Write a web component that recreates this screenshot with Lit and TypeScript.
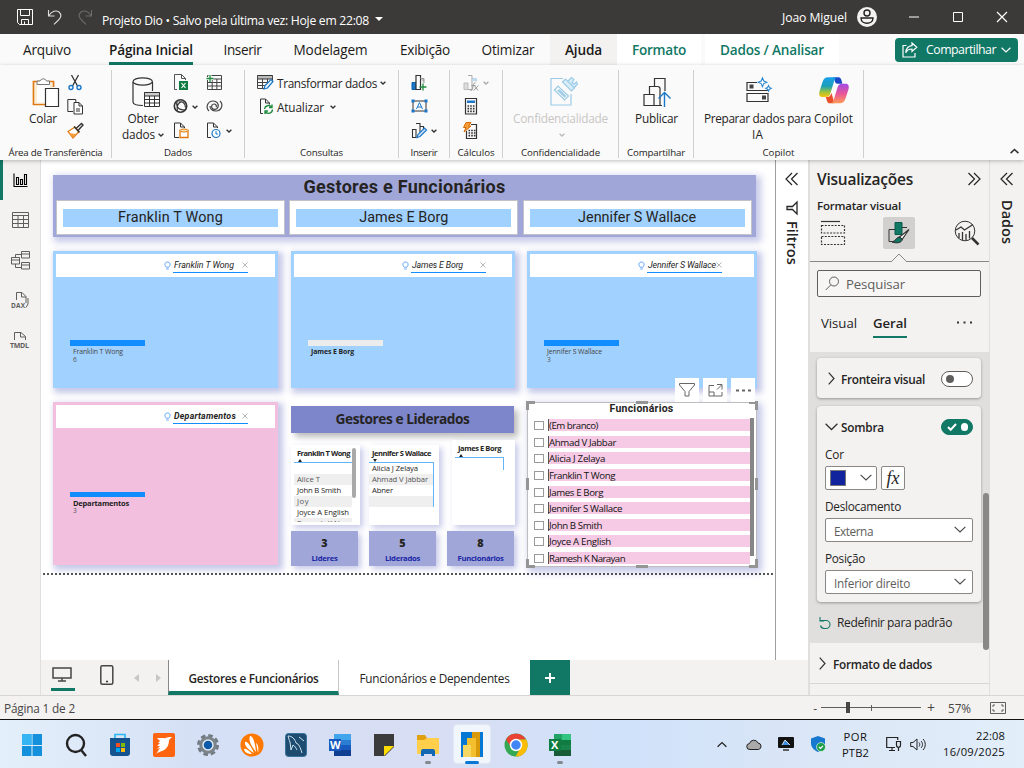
import { LitElement, html, css, svg, nothing } from "lit";
import { customElement, property } from "lit/decorators.js";
import { classMap } from "lit/directives/class-map.js";

/** A run of text whose tracking is adjusted so that it fills a given width. */
@customElement("fit-text")
class FitText extends LitElement {
  @property({ type: Number }) w = 0;
  @property() text = "";
  static styles = css`
    :host { display: inline-block; white-space: pre; flex: none; text-align: left; }
  `;
  render() {
    return html`<span>${this.text}</span>`;
  }
  updated() {
    const s = this.renderRoot.querySelector("span") as HTMLElement;
    s.style.letterSpacing = "0px";
    const natural = s.getBoundingClientRect().width;
    s.style.letterSpacing = `${(this.w - natural) / Math.max(1, this.text.length)}px`;
    this.style.width = `${this.w}px`;
  }
}

const t = (w: number, text: string, cls = "") =>
  html`<fit-text class=${cls} .w=${w} .text=${text}></fit-text>`;

const ic = (w: number, h: number, body: unknown, cls = "") =>
  html`<svg class="ic ${cls}" width=${w} height=${h} viewBox="0 0 ${w} ${h}" fill="none" stroke="#333" stroke-width="1">${body}</svg>`;

const chev = (w = 6, c = "#333", sw = 1.4) =>
  html`<svg class="ic" width=${w} height=${w / 2 + 1.5} viewBox="0 0 ${w} ${w / 2 + 1.5}" fill="none" stroke=${c} stroke-width=${sw}><path d="M.6 .8L${w / 2} ${w / 2}L${w - 0.6} .8" /></svg>`;

const dbl = (right = false) =>
  ic(14, 14, right
    ? svg`<path d="M1.500 1L7.500 7L1.500 13M7 1L13 7L7 13" stroke="#252423" stroke-width="1.200"/>`
    : svg`<path d="M12.500 1L6.500 7L12.500 13M7 1L1 7L7 13" stroke="#252423" stroke-width="1.200"/>`);

const grid = (x: number, y: number, s: number, c = "#333") =>
  svg`<path d="M${x} ${y}h${s}v${s}h-${s}zM${x} ${y + s / 4}h${s}M${x} ${y + s / 2}h${s}M${x} ${y + (s * 3) / 4}h${s}M${x + s / 3} ${y + s / 4}v${s * 0.75}M${x + (s * 2) / 3} ${y + s / 4}v${s * 0.75}" stroke=${c}/>`;

const I = {
  save: ic(16, 16, svg`<path d="M.5 .5h15v15H2.500l-2-2zM3.500 .5v6h9v-6M4.500 15.500v-5h7v5M7.500 15v-2.500" stroke="#fff"/>`),
  undo: ic(16, 16, svg`<path d="M1.500 1v6h6M1.500 7C5 2 9 .8 12 3c3 2.500 2 6-.5 8L7 15.300" stroke="#dddcdb" stroke-width="1.100"/>`),
  redo: ic(16, 16, svg`<path d="M14.500 1v6h-6M14.500 7C11 2 7 .8 4 3c-3 2.500-2 6 .5 8L9 15.300" stroke="#6d6b69" stroke-width="1.100"/>`),
  paste: ic(28, 31, svg`<path d="M8 4.500H1.500v23H13M16 4.500h5.500V10" stroke="#e07a10" stroke-width="1.700"/><path d="M3 6h17v5h-7v15H3z" fill="#fdeed2" stroke="none"/><path d="M5 5.500h13v8h-5v12H5z" fill="#fdfdfd" stroke="none"/><path d="M5 7.500V4h3a3.500 3.500 0 0 1 6.500 0h3v3.500z" fill="#fff" stroke="#777"/><path d="M13.500 11.500h13v18h-13z" fill="#fff" stroke-width="1.200"/>`),
  cut: ic(16, 17, svg`<path d="M4.500 1l6 11M11.500 1l-6 11" stroke-width="1.300"/><circle cx="4" cy="13.500" r="2" stroke="#1a77c9" stroke-width="1.400"/><circle cx="12" cy="13.500" r="2" stroke="#1a77c9" stroke-width="1.400"/>`),
  copy: ic(17, 17, svg`<path d="M6 13.500H.8V1.500h8V4"/><path d="M7 4.500h5l3.500 3.500v8H7zM12 4.500V8h3.500M9 11h4M9 13h4" fill="#fff"/>`),
  brush: ic(17, 17, svg`<path d="M1 9.500L8 5l4 4.500-6 6.500z" fill="#fff" stroke="#e07a10" stroke-width="1.300"/><path d="M2 11l7 1-3 4z" fill="#f59d3b" stroke="none"/><path d="M7 4.500l5.500 6M9 6.500L14.500 1.500l1.500 1.500-5 5.500" stroke-width="1.400"/>`),
  db: ic(28, 31, svg`<path d="M1 5v20c0 2 4 3.500 10 3.500M20.500 5v9" stroke-width="1.200"/><ellipse cx="10.700" cy="4.500" rx="9.700" ry="3.700" stroke-width="1.200"/><path d="M12.500 15.500h15v14h-15z" fill="#fff"/><path d="M12.500 15.500h15v3.500h-15z" fill="#ccc"/><path d="M12.500 22.500h15M12.500 26h15M17.500 19v11M22.500 19v11"/>`),
  excelFile: ic(16, 17, svg`<path d="M4 15.500H1.500v-15h7l4 4V6M8.500 .5v4h4" stroke="#555"/><rect x="6" y="7" width="9" height="9" fill="#107c41" stroke="none"/><path d="M8.500 9l4 5M12.500 9l-4 5" stroke="#fff" stroke-width="1.200"/>`),
  hub: ic(16, 16, svg`<circle cx="7.500" cy="8" r="6.200" stroke-width="1.600"/><path d="M4 3.500c-1 5 1 8.500 8 8.500M5.500 4c4-1 7 1 7 5.500M4.500 12.500c-1.500-4 .5-8 5-9" stroke-width="1.200"/>`),
  dbFile: ic(16, 17, svg`<path d="M6 15.500H1.500V1h6l4 4v1M7.500 1v4h4"/><path d="M7 8.500v7h8v-7z" fill="#fff" stroke="#e07a10" stroke-width="1.300"/><ellipse cx="11" cy="8.500" rx="4" ry="1.500" fill="#fbe3b0" stroke="#e07a10"/>`),
  newTable: ic(17, 17, svg`${grid(1.5, 1.500, 14, "#444")}<path d="M.5 4.500h7M4 1v7" stroke="#fafafa" stroke-width="3"/><path d="M.5 4.500h7M4 1v7" stroke="#218c41" stroke-width="1.300"/>`),
  spiral: ic(17, 16, svg`<path d="M3 13c-4-4-1-10 4-10 4 0 6 3 5 6s-5 3-6 1 0-4 2-4 3 2 2 3M14 3c4 4 1 10-4 10-4 0-6-2-6-5" stroke="#444" stroke-width="1.200"/>`),
  recent: ic(16, 17, svg`<path d="M5 15.500H1.500V1h6l4 4v1M7.500 1v4h4"/><circle cx="10" cy="11.500" r="4" fill="#fff" stroke="#1a77c9" stroke-width="1.200"/><path d="M10 9v3h2" stroke="#1a77c9"/>`),
  transform: ic(17, 17, svg`<path d="M.5 1.500h15v3.500H.5z" fill="#bbb"/><path d="M.5 1.500v13h8M15.500 2v5M.5 8.500h12M.5 11.500h9M5.500 5v10M10.500 5v5" stroke="#444"/><path d="M7 15l1-3.500L14 5.500l2 2L10.500 14z" fill="#e6f2fb" stroke="#1a77c9" stroke-width="1.200"/>`),
  refresh: ic(15, 17, svg`<path d="M4 15.500H1.500V1h5l4 4v1.500M6.500 1v4h4"/><path d="M5.500 11a4 4 0 0 1 7-2M13.500 11.500a4 4 0 0 1-7 2.500M13 6.500v3h-3M6 16v-3h3" stroke="#218c41" stroke-width="1.400"/>`),
  newVisual: ic(16, 17, svg`<path d="M1 8.500h4v7H1z" fill="#1a77c9" stroke="#0f5ea8"/><path d="M5 1.500h4.500v14H5z" fill="#fff" stroke-width="1.200"/><path d="M9.500 4.500h3.500V9" fill="#bbb" stroke="#999"/><path d="M8.500 13h7M12 9.500v7" stroke="#218c41" stroke-width="1.300"/>`),
  textbox: ic(17, 14, svg`<path d="M2 2h13v10H2z" stroke="#333"/><path d="M5.500 10L8.500 3.500l3 6.500M6.500 8h4" stroke="#1a77c9"/><path d="M.5 .5h3v3h-3zM13.500 .5h3v3h-3zM.5 10.500h3v3h-3zM13.500 10.500h3v3h-3z" fill="#1a77c9" stroke="none"/>`),
  shapes: ic(17, 17, svg`<path d="M1.500 7.500H5v8H1.500zM5 1.500h4v9M9 4.500h3.500v3" stroke-width="1.100"/><path d="M6 15.500l1-3L13.500 6l2 2L9 14.500z" fill="#cfe6f8" stroke="#1a77c9" stroke-width="1.200"/>`),
  quick: ic(17, 17, svg`<path d="M1 9h4v6.500H1z" fill="#ddd" stroke="#bbb"/><path d="M5 1.500h4v14H5M9 4.500h4v3" stroke="#aaa"/><path d="M9.500 4h4v3h-4z" fill="#b9dcf2" stroke="none"/><path d="M7.500 16.500c2 0 2-1 2.500-4s1-4 2.500-3.500M8.500 11.500h4M11.500 11.500l3.500 5M15.500 11.500l-5 5" stroke="#999"/>`),
  calc: ic(14, 17, svg`<path d="M1.500 .5h11v15.500h-11z" stroke-width="1.200"/><path d="M3 2.500h8v2.500H3z" fill="#1a77c9" stroke="none"/><path d="M3.500 8h7M3.500 10.700h7M3.500 13.400h7" stroke-width="1.700" stroke-dasharray="1.600 1.100"/>`),
  calcBolt: ic(16, 17, svg`<path d="M8 2.500h5.500v14h-10V9" stroke-width="1.200"/><path d="M5.500 8.500h7M5.500 11h7M5.500 13.700h7" stroke-width="1.700" stroke-dasharray="1.600 1.100"/><path d="M3 .5h5L5.500 4H8L1 10l2-4.500H.5z" fill="#f59d3b" stroke="#d66a00"/>`),
  sens: ic(28, 31, svg`<g stroke="#9ccbe6" stroke-width="1.200"><path d="M13 1.500H1v26.500h20V17"/><path d="M4.500 13l3.500-4L18.500 19l-4 4zM7.500 13l7 7 1-1-6.500-6.500"/><path d="M12.500 5l3-3 9 9-3 3zM18 4l3.500-3.500 2.500 2-2 3 2 1.500 2.500-2 1 2-3.500 4" fill="#d7edf8"/></g>`),
  publish: ic(28, 31, svg`<path d="M1 17.500h10v11H1zM6.500 17.500v-8h9M11 28.500h8M11.500 9V1.500h10.500V14M15.500 9.500L17 11v17" stroke-width="1.200"/><path d="M21.500 30V16M15.500 21.500l6-6 6 6" stroke="#1a77c9" stroke-width="1.400"/>`),
  prep: ic(26, 26, svg`<path d="M11 5.500H1v8h21v-2M1 16.500h21v8H1z" stroke-width="1.200"/><path d="M3.500 7.500h4v4h-4zM16 18.500h4v4h-4z" fill="#444" stroke="none"/><path d="M16.500 1l1.300 3 3 1.300-3 1.300-1.300 3-1.300-3-3-1.300 3-1.300zM22.500 8.500l.9 1.900 1.900.9-1.900.9-.9 1.900-.9-1.900-1.900-.9 1.900-.9z" fill="#fff" stroke="#2a86cf" stroke-width="1.100"/>`),
  copilot: html`<svg class="ic" width="30" height="27" viewBox="0 0 30 27">
    <defs>
      <linearGradient id="ca" x1="0" y1="0" x2="0" y2="1"><stop offset="0" stop-color="#1ba0ec"/><stop offset=".45" stop-color="#1c9fb8"/><stop offset=".75" stop-color="#9fc43c"/><stop offset="1" stop-color="#fdc20f"/></linearGradient>
      <linearGradient id="cb" x1="0" y1="0" x2="0" y2="1"><stop offset="0" stop-color="#a24ce6"/><stop offset=".5" stop-color="#e8559a"/><stop offset="1" stop-color="#ff9a57"/></linearGradient>
    </defs>
    <path d="M14 .3h5c3 0 3.500 2.500 4.300 6.500h-4.800c-3 0-2-3-4.500-6.500z" fill="#1b48c8"/>
    <path d="M8 20c3 0 3.300-1.500 4.500-4l3 10.300H11c-3.300 0-3-3.500-4.300-6.300z" fill="#e8502b"/>
    <path d="M9 .3h8.500c-1.700 1-2 2.700-2.700 5L11.500 16c-.8 2.600-2 4-4.500 4H3.500C.3 20-.3 17.500.5 14.500L3.500 5C4.500 2 6 .3 9 .3z" fill="url(#ca)"/>
    <path d="M21 26.300h-8.500c1.700-1 2-2.700 2.700-5l3.300-10.700c.8-2.600 2-3.800 4.500-3.800h3.500c3.200 0 3.800 2.500 3 5.500l-3 9.200c-1 3-2.500 4.800-5.500 4.800z" fill="url(#cb)"/></svg>`,
  share: ic(16, 16, svg`<path d="M4.500 3.500H1v11.500h12v-4M10 1l4.800 4.300L10 9.500V7C7 7 5 8 3.800 10.800 4 6.500 6 4 10 3.600z" stroke="#fff" stroke-width="1.200"/>`),
  report: ic(15, 15, svg`<path d="M1 .5v13h13.500M3.500 4.500h2v7h-2zM7.500 6.500h2v5h-2zM11.500 1.500h2v10h-2z" stroke="#000" stroke-width="1.100"/>`),
  tableView: ic(17, 16, svg`<path d="M.5 .5h16v15H.5zM.5 3.500h16M.5 7.500h16M.5 11.500h16M6 3.500v12M11.500 3.500v12" stroke="#605e5c"/>`),
  model: ic(19, 19, svg`<path d="M.5 6.500h8v6.500h-8zM.5 9h8M10.500 .5h8V7h-8zM10.500 3h8M10.500 11.500h8V18h-8zM10.500 14h8M4.500 6V3.500h6M4.500 13v3.500h6" stroke="#605e5c"/>`),
  dax: html`<svg class="ic" width="18" height="18" viewBox="0 0 18 18" fill="none" stroke="#605e5c"><path d="M5.500 9V1.500h5.500l4 4V12M10.500 1.500V6h4.500M17 7v6l-2 3.500"/><text x="0" y="16.500" font-size="6.500" font-weight="700" fill="#605e5c" stroke="none" textLength="14">DAX</text></svg>`,
  tmdl: html`<svg class="ic" width="20" height="18" viewBox="0 0 20 18" fill="none" stroke="#605e5c"><path d="M4.500 9V1.500h6.500l4.500 4V9M10.500 1.500V6h5"/><text x="0" y="17" font-size="7" font-weight="700" fill="#605e5c" stroke="none" textLength="19">TMDL</text></svg>`,
  bulb: ic(7, 9, svg`<path d="M2.200 6.200C.3 4.500.4 1 3.500 1s3.200 3.500 1.300 5.200zM2.300 8h2.400" stroke="#4f9bf5" stroke-width=".9"/>`),
  x: ic(6, 6, svg`<path d="M.5 .5l5 5M5.500 .5l-5 5" stroke="#999" stroke-width=".7"/>`),
  funnelSide: ic(12, 14, svg`<path d="M11 1v12L6.500 8.500H1v-3h5.500z" stroke="#252423" stroke-width="1.300"/>`),
  funnel: ic(16, 16, svg`<path d="M.5 1.500h15v1.500L10 9.500V14H6V9.500L.5 3z" stroke="#666"/>`),
  focus: ic(15, 14, svg`<path d="M6 2.500H1v10.500h13V9M1 9h5v4M9 1.500h5v5M13.500 2L9 6.500" stroke="#666"/>`),
  fields: ic(26, 26, svg`<path d="M1 1.500h19" stroke-width="1.200"/><path d="M1.500 5.500h23v7.500h-23zM1.500 16.500h23v8h-23z" stroke-dasharray="2 1.300" stroke-width="1.200"/>`),
  paint: ic(24, 24, svg`<path d="M8 1.500h7v12H8z" fill="#117865" stroke="#0b5a4c"/><path d="M8 8.500H2v12h3M15 6.500h5" /><path d="M22 8.500L12.500 16l2.500 2.500z" fill="#fff" stroke-width="1.200"/><path d="M12.500 16c-3 0-3.500 4-7.500 5 4 1.500 10 1 10-2.500z" fill="#117865" stroke="#222"/>`),
  analyze: ic(26, 26, svg`<circle cx="11" cy="11" r="9.800"/><path d="M18 18l6.500 6.500" stroke-width="2.500"/><path d="M2 10l5-3 3.500 3L19 4.500M5 18v-5M8.500 20v-8M12 20v-6M15.500 18.500V11" stroke-width="1.300"/>`),
  search: ic(15, 15, svg`<circle cx="9" cy="5.500" r="4.500" stroke="#605e5c"/><path d="M5.700 9L.7 14" stroke="#605e5c"/>`),
  reset: ic(12, 12, svg`<path d="M1 0v4h4M1.500 3.500H7a4 4 0 0 1 0 8H5a4 4 0 0 1-3.500-3" stroke="#117865" stroke-width="1.100"/>`),
};

const gestor = (w: number, name: string, count: string, o: { muted?: boolean; bold?: boolean; pink?: boolean; tw?: number; lw?: number }) => html`
  <div class=${classMap({ card: true, pink: !!o.pink })} style="width:${w}px">
    <div class="strip">
      ${I.bulb}
      <div class="query">${t(o.tw ?? 60, name, "q")}<span class="grow"></span>${I.x}</div>
    </div>
    <div class=${classMap({ bar: true, muted: !!o.muted })}></div>
    <div class=${classMap({ cap: true, strong: !!o.bold })}>${t(o.lw ?? 50, name)}</div>
    <div class="cap num">${count}</div>
  </div>`;

const grp = (w: number, lw: number, label: string, body: unknown) => html`
  <div class="grp" style="width:${w}px"><div class="gbody">${body}</div><div class="glabel">${t(lw, label)}</div></div>`;

const TASKS: [string, unknown, string?][] = [
  ["start", html`<svg width="22" height="24" viewBox="0 0 22 24"><path d="M1 1h9.500v11H1zM11.500 1H21v11h-9.500zM1 13h9.500v10H1zM11.500 13H21v10h-9.500z" fill="#1590dc"/><path d="M1 1h9.500v11H1z" fill="#35b5f3"/></svg>`],
  ["search", html`<svg width="22" height="24" viewBox="0 0 22 24" fill="none" stroke="#222" stroke-width="2.400"><circle cx="10.500" cy="10.500" r="8.500"/><path d="M16.500 17.500L21 23"/></svg>`],
  ["store", html`<svg width="22" height="24" viewBox="0 0 22 24"><path d="M6 6V1.500h10V6" fill="none" stroke="#29b6f0" stroke-width="1.600"/><path d="M1 5h20v15a3 3 0 0 1-3 3H4a3 3 0 0 1-3-3z" fill="#15538f"/><path d="M7 10h4v4H7z" fill="#f25022"/><path d="M12 10h4v4h-4z" fill="#7fba00"/><path d="M7 15h4v4H7z" fill="#00a4ef"/><path d="M12 15h4v4h-4z" fill="#ffb900"/></svg>`],
  ["bird", html`<svg width="22" height="24" viewBox="0 0 22 24"><rect width="22" height="24" rx="2" fill="#ff6410"/><path d="M4 5h8l-1 1c3-2 5-2 8-2l-3 3c0 5-2 9-7 11-2 1-4 1-6 3l4-6-3 1 3-3-3 0 3-3-2 0 2-2z" fill="#fff"/></svg>`],
  ["settings", html`<svg width="22" height="24" viewBox="0 0 22 24"><circle cx="11" cy="12" r="9.500" fill="none" stroke="#727a82" stroke-width="3" stroke-dasharray="4.500 2.960"/><circle cx="11" cy="12" r="7" fill="#1766b3" stroke="#7b838b" stroke-width="3.500"/><circle cx="11" cy="12" r="5" fill="#0c5aa8" stroke="#e6ebf0" stroke-width="1.500"/></svg>`],
  ["avast", html`<svg width="24" height="24" viewBox="0 0 24 24"><circle cx="12" cy="12" r="11.500" fill="#ff7800"/><path d="M10 3c3 0 5 6 6 16-4-5-8-11-6-16zM5 9c2-1 6 4 9 11C9 17 4 13 5 9zM4 16c1-1 5 1 8 5-4 0-8-2-8-5zM16 10c2 1 3 5 2 10z" fill="#fff"/></svg>`],
  ["workbench", html`<svg width="22" height="24" viewBox="0 0 22 24"><rect x=".5" y=".5" width="21" height="23" rx="3" fill="#1d4c70" stroke="#39739b"/><path d="M3 3c4 0 7 3 8 7 3 1 4 4 6 10M3 3c1 3 1 4 2 6l1 8 2-5c2 1 3 3 4 5M14 4l5 4" fill="none" stroke="#cfe3f0"/></svg>`],
  ["word", html`<svg width="24" height="24" viewBox="0 0 24 24"><path d="M6 1h17v6H6z" fill="#41a5ee"/><path d="M6 7h17v5H6z" fill="#2b7cd3"/><path d="M6 12h17v5H6z" fill="#185abd"/><path d="M6 17h17v6H6z" fill="#103f91"/><path d="M1 6h12v12H1z" fill="#185abd"/><text x="2" y="16" font-size="11" font-weight="700" fill="#fff" textLength="10">W</text></svg>`],
  ["notes", html`<svg width="22" height="24" viewBox="0 0 22 24"><path d="M1 1h20v13l-9 9H1z" fill="#3b3b3b"/><path d="M11 13h10l-10 10z" fill="#ffdc00"/></svg>`],
  ["files", html`<svg width="24" height="24" viewBox="0 0 24 24"><path d="M1 2h8l2 3h11v6H1z" fill="#e0a010"/><path d="M1 7h7l3-2h12v16H1z" fill="#ffcf4b"/><path d="M5 23v-5a2 2 0 0 1 2-2h10a2 2 0 0 1 2 2v5h-3v-2H8v2z" fill="#1468b3"/></svg>`, "run"],
  ["pbi", html`<svg width="22" height="25" viewBox="0 0 22 25"><path d="M0 0h22v25H0z" fill="#0678d4"/><path d="M11 0h8v25h-8z" fill="#d99a0c"/><path d="M6 6h9v19H6z" fill="#f4bf2e"/><path d="M2 13h8v12H2z" fill="#f7d763"/></svg>`, "active"],
  ["chrome", html`<svg width="24" height="24" viewBox="0 0 24 24"><circle cx="12" cy="12" r="11.500" fill="#34a853"/><path d="M2 6.500A11.500 11.500 0 0 1 22 6.500H12L7 14z" fill="#ea4335"/><path d="M22.200 6.500A11.500 11.500 0 0 1 11.500 23.500L17 14l-2-7.500z" fill="#fbbc04"/><circle cx="12" cy="12" r="5.500" fill="#4285f4" stroke="#fff" stroke-width="1.500"/></svg>`],
  ["excel", html`<svg width="24" height="24" viewBox="0 0 24 24"><path d="M6 1h17v6H6z" fill="#21a366"/><path d="M14 1h9v6h-9z" fill="#33c481"/><path d="M6 7h17v5H6z" fill="#107c41"/><path d="M6 12h17v5H6z" fill="#18834a"/><path d="M6 17h17v6H6z" fill="#185c37"/><path d="M1 6h12v12H1z" fill="#107c41"/><text x="3" y="16" font-size="11" font-weight="700" fill="#fff" textLength="8">X</text></svg>`, "run"],
];

@customElement("app-root")
class AppRoot extends LitElement {
  static styles = css`
    * { box-sizing: border-box; }
    :host { display: flex; flex-direction: column; width: 1024px; height: 768px; overflow: hidden; font-family: "Open Sans", "Noto Sans", sans-serif; font-size: 11.800px; line-height: 16px; color: #252423; background: #fff; white-space: nowrap; }
    .ic { display: block; flex: none; overflow: visible; }
    .row { display: flex; align-items: center; }
    .grow { flex: 1; }
    .title { height: 34px; flex: none; background: #3b3a38; color: #fff; display: flex; align-items: center; padding: 0 17px 0 17px; font-size: 12.200px; }
    .title .undo { margin-left: 14px; }
    .title .redo { margin: 0 9px 0 14px; }
    .title .name { margin-top: 7px; }
    .title .user { margin-top: 1px; display: flex; }
    .caret { border: 4px solid transparent; border-top: 4px solid #fff; border-bottom: 0; margin: -3px 0 0 6px; }
    .avatar { margin: 0 32px 0 10px; }
    .wmin { margin-right: 34px; } .wmax { margin-right: 34px; }
    .tabs { height: 31px; flex: none; background: #fafafa; display: flex; font-size: 13.600px; line-height: 32px; color: #1b1a19; }
    .tab { display: flex; justify-content: center; height: 31px; flex: none; }
    .tab.on { font-weight: 600; }
    .tab.on fit-text { border-bottom: 3px solid #117865; height: 31px; }
    .tab.hover { background: #f3f2f1; font-weight: 600; }
    .tab.ctx { background: #fff; color: #117865; font-weight: 600; }
    .tab.gap { margin-left: 4px; }
    .sharebtn { margin: 4px 6px 0 auto; width: 123px; height: 24px; border-radius: 4px; background: #117865; color: #fff; display: flex; align-items: center; gap: 8px; padding-left: 7px; font-size: 12.300px; font-weight: 500; line-height: 16px; }
    .sharebtn .v { margin-left: -3px; }
    .ribbon { height: 95px; flex: none; background: #fafafa; display: flex; padding-top: 5px; box-shadow: 0 1px 4px #0004; position: relative; z-index: 3; }
    .grp { height: 88px; border-right: 1px solid #d2d0ce; flex: none; display: flex; flex-direction: column; }
    .gbody { height: 75px; display: flex; align-items: flex-start; flex: none; }
    .glabel { font-size: 9.700px; line-height: 16px; display: flex; justify-content: center; height: 13px; }
    .big { display: flex; flex-direction: column; align-items: center; padding-top: 7px; flex: none; line-height: 16px; }
    .big .ic { margin-bottom: 2px; }
    .big .row .ic { margin: 2px 0 0 3px; }
    .big.off { color: #c8c6c4; }
    .col { display: flex; flex-direction: column; padding-top: 0; flex: none; }
    .cell { height: 24px; display: flex; align-items: center; gap: 5px; }
    .cell fit-text { margin-top: 1px; }
    .cell .ic:nth-of-type(2) { margin-top: 3px; }
    .collapse { margin: 78px 5px 0 auto; transform: scaleY(-1); height: 6px; }
    .main { height: 535px; flex: none; display: flex; background: #f3f2f1; }
    .rail { width: 41px; border-right: 1px solid #e1dfdd; }
    .rail div { height: 40px; display: flex; align-items: center; justify-content: center; }
    .rail .on { border-left: 3px solid #117865; padding-right: 3px; }
    .center { width: 767px; display: flex; flex-direction: column; }
    .work { height: 500px; display: flex; background: #fff; }
    .canvas { width: 734px; padding: 15px 0 0 2px; position: relative; overflow: hidden; }
    .inner { padding-left: 10px; }
    .hero { width: 703px; height: 62px; background: #a1a6d9; box-shadow: 3px 3px 7px 2px #1a26a440; padding: 0 3px; }
    .hero h1 { margin: 0; height: 25px; font: 700 18px/23px Roboto, sans-serif; display: flex; justify-content: center; }
    .chips { display: flex; gap: 4.300px; }
    .chip { height: 35px; border: 1px solid #c2c2c8; background: #fff; display: flex; align-items: center; padding: 0 6px; }
    .chip div { flex: 1; height: 18px; background: #a1d1ff; display: flex; justify-content: center; font: 400 14.400px/18px Roboto, sans-serif; }
    .cards { display: flex; margin-top: 14px; }
    .card { height: 137px; background: #a1d1ff; box-shadow: 3px 3px 6px 2px #1a26a440; padding: 3px 3px 0; flex: none; }
    .card.pink { background: #f3bfdf; height: 163px; }
    .strip { height: 23px; background: #fff; display: flex; align-items: center; padding-left: 108px; }
    .query { width: 75px; margin: 0 0 -1px 2px; height: 14px; border-bottom: 1.500px solid #118dff; display: flex; align-items: center; padding-left: 1px; }
    .q { font: italic 400 8.800px/10px Roboto, sans-serif; margin-top: -1px; }
    .query .ic { margin-top: -1px; }
    .pink .q { font-weight: 700; }
    .bar { width: 75px; height: 6px; background: #118dff; margin: 63px 0 0 14px; }
    .bar.muted { background: #ececec; }
    .pink .bar { margin-top: 64px; height: 5px; }
    .cap { font-size: 6.900px; line-height: 8px; margin: 1.500px 0 0 17px; height: 8px; display: flex; color: #444; }
    .pink .cap { font-size: 7.500px; margin-top: 2px; }
    .cap.num { margin-top: 0; font-size: 6.700px; color: #555; }
    .pink .cap.num { margin-top: 0; font-size: 6.700px; }
    .cap.strong { font-weight: 700; color: #222; }
    .mid { width: 224px; padding-top: 4px; margin-left: 13px; }
    .mid h2 { margin: 0; width: 223px; height: 27px; background: #7d85cb; font-size: 13.700px; font-weight: 700; line-height: 26px; display: flex; justify-content: center; box-shadow: 4px 4px 6px #0004; }
    .tables { display: flex; height: 92px; align-items: flex-end; }
    .tbl { background: #fff; height: 80px; box-shadow: 3px 3px 6px #1a26a440; flex: none; padding: 3px 4px 0 3px; font-size: 7.700px; line-height: 11px; }
    .tbl.t1 { width: 69px; margin-right: 9px; display: flex; }
    .tbl.t2 { width: 70px; margin-right: 13px; padding: 3px 5px 0 0; }
    .tbl.t3 { width: 63px; height: 85px; padding: 3px 11px 0 3px; }
    .rows { width: 58px; height: 74px; overflow: hidden; flex: none; }
    .th { height: 15px; border-bottom: 1px solid #63b5f7; font-weight: 700; font-size: 7.500px; padding-left: 3px; line-height: 11px; display: flex; flex-direction: column; }
    .tri { border: 2.500px solid transparent; border-bottom: 3px solid #222; border-top: 0; width: 0; margin: 0 0 0 1px; }
    .tri.dn { border-bottom: 0; border-top: 3px solid #222; }
    .td { height: 11px; padding-left: 3px; display: flex; }
    .td.alt { background: #efefef; color: #555; }
    .edge { border-right: 1px solid #63b5f7; }
    .t3 .edge { height: 12px; }
    .sb { width: 4px; height: 50px; border-radius: 2px; background: #a9a9a9; flex: none; }
    .kpis { display: flex; justify-content: space-between; width: 223px; margin-top: 6px; }
    .kpi { width: 67px; height: 35px; background: #a1a6d9; box-shadow: 3px 3px 6px #1a26a440; font-weight: 700; display: flex; flex-direction: column; align-items: center; color: #1a26a4; font-size: 7.700px; line-height: 14px; padding-top: 4px; }
    .kpi b { color: #252423; font-size: 10.800px; line-height: 16px; height: 16px; }
    .slicer { width: 230px; height: 165px; margin-left: 12px; border: 1px solid #bdbdbd; box-shadow: 3px 3px 7px 2px #1a26a440; background: #fff; position: relative; padding: 1px 1px 3px 6px; flex: none; }
    .slicer h3 { margin: 0; height: 14px; font: 700 10.500px/9px Roboto, sans-serif; display: flex; justify-content: center; padding-right: 6px; }
    .sl { display: flex; height: 146px; overflow: hidden; margin-left: 0; }
    .list { width: 216px; flex: none; font-size: 9.700px; line-height: 13px; color: #111; }
    .item { height: 16.650px; display: flex; align-items: flex-start; }
    .cb { width: 10px; height: 9px; border: 1px solid #9a9a9a; background: #fff; margin: 3px 4px 0 0; }
    .item p { margin: 1px 0 0; flex: 1; height: 12px; background: #f6cae5; border-left: 1px solid #555; line-height: 13px; }
    .sl .sb { height: 138px; background: #858585; border-radius: 0; }
    .hd { position: absolute; border: 0 solid #959595; width: 9px; height: 9px; }
    .tl { left: -2px; top: -2px; border-width: 3px 0 0 3px; } .tr { right: -2px; top: -2px; border-width: 3px 3px 0 0; }
    .bl { left: -2px; bottom: -2px; border-width: 0 0 3px 3px; } .br { right: -2px; bottom: -2px; border-width: 0 3px 3px 0; }
    .tm { left: 108px; top: -2px; width: 12px; border-top-width: 3px; } .bm { left: 108px; bottom: -2px; width: 12px; border-bottom-width: 3px; }
    .ml { left: -2px; top: 75px; height: 12px; border-left-width: 3px; } .mr { right: -2px; top: 75px; height: 12px; border-right-width: 3px; }
    .tools { position: absolute; right: 1px; top: -25px; display: flex; gap: 4px; }
    .tools div { width: 24px; height: 24px; background: #fff; display: flex; align-items: center; justify-content: center; }
    .dots { height: 2px; width: 732px; margin-top: 6px; background: repeating-linear-gradient(90deg, #555 0 2px, transparent 2px 4px); }
    .filters { width: 33px; border-left: 1px solid #a19f9d; display: flex; flex-direction: column; align-items: center; padding-top: 12px; }
    .vt { writing-mode: vertical-rl; font-weight: 600; font-size: 14.500px; line-height: 18px; }
    .pages { height: 35px; display: flex; }
    .dev { display: flex; padding-left: 10px; width: 127px; }
    .desk { width: 24px; height: 31px; border-bottom: 3px solid #117865; padding: 7px 0 0 1px; }
    .phone { margin: 5px 0 0 25px; }
    .tri2 { width: 0; border: 4px solid transparent; height: 8px; margin-top: 14px; }
    .tri2.l { border-right: 5px solid #c8c6c4; border-left: 0; margin-left: 20px; }
    .tri2.r { border-left: 5px solid #c8c6c4; border-right: 0; margin-left: 17px; }
    .pg { background: #fff; display: flex; justify-content: center; line-height: 37px; height: 35px; }
    .pg.on { width: 171px; border-left: 1px solid #8a8886; border-bottom: 4px solid #117865; font-weight: 600; border-right: 1px solid #c8c6c4; }
    .pg.two { width: 191px; }
    .add { width: 40px; background: #117865; display: flex; align-items: center; justify-content: center; }
    .viz { width: 182px; border-left: 2px solid #e1dfdd; border-right: 1px solid #e1dfdd; position: relative; overflow: hidden; display: flex; flex-direction: column; }
    .vh { display: flex; justify-content: space-between; padding: 12px 8px 0 7px; height: 39px; font-size: 15.500px; font-weight: 600; line-height: 14px; flex: none; }
    .vs { padding-left: 7px; height: 18px; line-height: 14px; font-weight: 600; font-size: 11.500px; flex: none; }
    .vi { display: flex; height: 45px; padding: 0 9px 0 10px; justify-content: space-between; align-items: flex-start; border-bottom: 1px solid #8a8886; flex: none; position: relative; }
    .vi > .ic { margin-top: 3px; }
    .sel { width: 32px; height: 32px; background: #d2d0ce; border-radius: 2px; display: flex; align-items: center; justify-content: center; margin-left: -2px; }
    .notch { position: absolute; left: 81px; bottom: -1px; }
    .find { margin: 8px 8px 0 7px; height: 27px; border: 1px solid #605e5c; border-radius: 2px; display: flex; align-items: center; padding-left: 7px; gap: 6px; font-size: 13.200px; color: #605e5c; flex: none; background: #f7f6f5; }
    .vt2 { height: 55px; display: flex; padding: 17px 8px 0 11px; font-size: 13.200px; line-height: 18px; flex: none; }
    .vt2 .on { margin-left: 16px; font-weight: 600; border-bottom: 2px solid #117865; height: 24px; }
    .vt2 .more { margin: 7px 9px 0 auto; }
    .body { background: #e1dfdd; height: 291px; padding: 6px 8px 0 7px; flex: none; }
    .pc { background: #f3f2f1; border-radius: 4px; box-shadow: 0 1px 3px #0005; padding: 0 8px; }
    .pc + .pc { margin-top: 8px; height: 196px; }
    .ph { height: 40px; display: flex; align-items: center; font-weight: 600; padding-top: 1px; }
    .lbl { height: 20px; line-height: 17px; }
    .inp { height: 24px; border: 1px solid #8a8886; border-radius: 2px; background: #fff; display: flex; align-items: center; justify-content: space-between; padding: 0 6px 0 8px; color: #605e5c; margin-bottom: 8px; }
    .inp fit-text { margin-top: 1px; }
    .colors { display: flex; gap: 4px; height: 32px; }
    .colors .inp { padding: 0 4px; width: 52px; }
    .colors .fx { width: 24px; padding: 0; justify-content: center; font: italic 18px/20px "Liberation Serif", serif; color: #252423; }
    .sw { width: 16px; height: 16px; background: #12239e; border: 1px solid #777; }
    .toggle { width: 32px; height: 16px; border: 1px solid #605e5c; border-radius: 8px; background: #fff; display: flex; align-items: center; padding: 0 4px; }
    .toggle i { width: 8px; height: 8px; border-radius: 4px; background: #605e5c; }
    .toggle.on { background: #117865; border-color: #117865; gap: 4px; padding-left: 5px; }
    .toggle.on i { background: #fff; }
    .reset { display: flex; align-items: center; gap: 6px; height: 41px; padding-left: 2px; font-size: 12px; }
    .fmt { height: 41px; border-bottom: 1px solid #d8d6d4; display: flex; align-items: center; padding: 1px 0 0 9px; font-weight: 600; flex: none; }
    .vsb { position: absolute; right: 0; top: 333px; width: 6px; height: 157px; border-radius: 3px; background: #8a8886; }
    .data { width: 34px; display: flex; flex-direction: column; align-items: center; padding-top: 12px; }
    .status { height: 25px; flex: none; background: #f3f2f1; border-top: 1px solid #d8d6d4; border-bottom: 1px solid #111; display: flex; align-items: center; padding: 1px 18px 0 4px; color: #484644; }
    .zoom { width: 100px; height: 12px; margin: 0 6px 0 4px; }
    .task { height: 48px; flex: none; background: linear-gradient(90deg, #e3f0fa, #d5dff5 20%, #d8def3 45%, #cfe2fa 60%, #dbe6f6 80%, #e2eefa); display: flex; align-items: center; padding: 0 19px 0 13px; color: #111; }
    .app { width: 38px; height: 40px; margin-right: 6px; display: flex; flex-direction: column; align-items: center; justify-content: center; border-radius: 4px; padding-top: 1px; flex: none; }
    .app svg { display: block; }
    .app::after { content: ""; width: 6px; height: 3px; border-radius: 2px; margin: 4px 0 -7px; }
    .app.run::after { background: #84888f; }
    .app.active { background: #f1f5fc; border: 1px solid #e2e8f3; }
    .app.active::after { background: #0678d4; width: 14px; }
    .tray { display: flex; align-items: center; margin-left: auto; font-size: 11.200px; line-height: 16px; }
    .lang { text-align: center; margin: 1px 17px 0 16px; }
    .clock { display: flex; flex-direction: column; align-items: flex-end; margin-left: 17px; }
  `;

  names = ["(Em branco)", "Ahmad V Jabbar", "Alicia J Zelaya", "Franklin T Wong", "James E Borg", "Jennifer S Wallace", "John B Smith", "Joyce A English", "Ramesh K Narayan"];
  widths = [49, 67, 56, 66, 54, 73, 53, 62, 76];

  ribbon() {
    return html`<div class="ribbon">
      ${grp(112, 94, "Área de Transferência", html`
        <div class="big" style="width:86px"><div style="margin-left:5px">${I.paste}</div>${t(28, "Colar")}</div>
        <div class="col" style="margin-left:-19px"><div class="cell">${I.cut}</div><div class="cell">${I.copy}</div><div class="cell">${I.brush}</div></div>`)}
      ${grp(133, 28, "Dados", html`
        <div class="big" style="margin-left:10px;width:42px"><div style="margin-left:5px">${I.db}</div>${t(31, "Obter")}<div class="row">${t(33, "dados")}${chev()}</div></div>
        <div class="col" style="margin-left:9px;width:33px"><div class="cell">${I.excelFile}</div><div class="cell" style="gap:3px">${I.hub}${chev()}</div><div class="cell">${I.dbFile}</div></div>
        <div class="col"><div class="cell">${I.newTable}</div><div class="cell">${I.spiral}</div><div class="cell" style="gap:4px">${I.recent}${chev()}</div></div>`)}
      ${grp(154, 43, "Consultas", html`<div class="col" style="margin-left:12px">
        <div class="cell" style="gap:3px">${I.transform}${t(100, "Transformar dados")}${chev()}</div>
        <div class="cell" style="gap:3px;padding-left:2px">${I.refresh}${t(47, "Atualizar")}<span></span>${chev()}</div></div>`)}
      ${grp(51, 27, "Inserir", html`<div class="col" style="margin-left:12px">
        <div class="cell">${I.newVisual}</div><div class="cell">${I.textbox}</div><div class="cell" style="gap:3px">${I.shapes}${chev()}</div></div>`)}
      ${grp(53, 37, "Cálculos", html`<div class="col" style="margin-left:13px">
        <div class="cell" style="gap:3px">${I.quick}${chev(6, "#aaa")}</div><div class="cell" style="padding-left:1px">${I.calc}</div><div class="cell">${I.calcBolt}</div></div>`)}
      ${grp(116, 79, "Confidencialidade", html`<div class="big off" style="width:115px"><div style="margin-left:6px">${I.sens}</div>${t(95, "Confidencialidade")}<div class="row" style="height:16px">${chev(6, "#bbb")}</div></div>`)}
      ${grp(75, 58, "Compartilhar", html`<div class="big" style="width:75px">${I.publish}${t(43, "Publicar")}</div>`)}
      ${grp(170, 32, "Copilot", html`<div class="big" style="margin-left:9px;width:109px"><div style="margin-left:2px">${I.prep}</div><span style="height:5px"></span>${t(107, "Preparar dados para")}${t(11, "IA")}</div>
        <div class="big" style="width:43px">${I.copilot}<span style="height:4px"></span>${t(39, "Copilot")}</div>`)}
      <div class="collapse">${chev(9, "#333", 1.6)}</div>
    </div>`;
  }

  report() {
    const td = (w: number, s: string, alt = false) => html`<div class=${classMap({ td: true, alt })}>${s ? t(w, s) : nothing}</div>`;
    return html`<div class="canvas"><div class="inner">
      <div class="hero"><h1>${t(202, "Gestores e Funcionários")}</h1>
        <div class="chips">
          ${[["Franklin T Wong", 105, 229], ["James E Borg", 89, 229], ["Jennifer S Wallace", 118, 229]].map(([n, w, cw]) => html`<div class="chip" style="width:${cw}px"><div>${t(w as number, n as string)}</div></div>`)}
        </div></div>
      <div class="cards">
        ${gestor(225, "Franklin T Wong", "6", { tw: 60, lw: 50 })}<span style="width:13px"></span>
        ${gestor(224, "James E Borg", "", { tw: 51, lw: 43, muted: true, bold: true })}<span style="width:12px"></span>
        ${gestor(230, "Jennifer S Wallace", "3", { tw: 68, lw: 55 })}
      </div>
      <div class="cards">
        ${gestor(225, "Departamentos", "3", { tw: 62, lw: 56, bold: true, pink: true })}
        <div class="mid">
          <h2>${t(134, "Gestores e Liderados")}</h2>
          <div class="tables">
            <div class="tbl t1"><div class="rows"><div class="th">${t(53, "Franklin T Wong")}<i class="tri"></i></div>
              ${td(0, "")}${td(23, "Alice T", true)}${td(44, "John B Smith")}${td(12, "Joy", true)}${td(52, "Joyce A English")}${td(50, "Ramesh K Nar", true)}</div><div class="sb"></div></div>
            <div class="tbl t2"><div class="th">${t(59, "Jennifer S Wallace")}<i class="tri dn"></i></div>
              <div class="edge">${td(46, "Alicia J Zelaya")}${td(56, "Ahmad V Jabbar", true)}${td(21, "Abner")}${td(0, "", true)}</div></div>
            <div class="tbl t3"><div class="th">${t(43, "James E Borg")}<i class="tri"></i></div><div class="edge"></div></div>
          </div>
          <div class="kpis">
            <div class="kpi"><b>3</b>${t(26, "Lideres")}</div><div class="kpi"><b>5</b>${t(35, "Liderados")}</div><div class="kpi"><b>8</b>${t(46, "Funcionários")}</div>
          </div>
        </div>
        <div class="slicer"><h3>${t(64, "Funcionários")}</h3>
          <div class="sl"><div class="list">${this.names.map((n, i) => html`<div class="item"><span class="cb"></span><p>${t(this.widths[i], n)}</p></div>`)}</div><div class="sb"></div></div>
          ${["tl", "tr", "bl", "br", "tm", "bm", "ml", "mr"].map((c) => html`<i class="hd ${c}"></i>`)}
          <div class="tools"><div>${I.funnel}</div><div>${I.focus}</div><div>${ic(15, 3, svg`<path d="M0 .5h3v2H0zM6 .5h3v2H6zM12 .5h3v2h-3z" fill="#666" stroke="none"/>`)}</div></div>
        </div>
      </div></div>
      <div class="dots"></div>
    </div>`;
  }

  viz() {
    const v = chev(12, "#484644", 1.1);
    return html`<div class="viz">
      <div class="vh">${t(96, "Visualizações")}${dbl(true)}</div>
      <div class="vs">${t(84, "Formatar visual")}</div>
      <div class="vi">${I.fields}<div class="sel">${I.paint}</div>${I.analyze}
        <svg class="notch" width="16" height="9" viewBox="0 0 16 9"><path d="M0 9L8 1L16 9" fill="#f3f2f1" stroke="#8a8886"/></svg></div>
      <div class="find">${I.search}${t(59, "Pesquisar")}</div>
      <div class="vt2">${t(36, "Visual")}<div class="on">${t(34, "Geral")}</div><div class="more">${ic(15, 3, svg`<path d="M0 .5h2v2H0zM6.500 .5h2v2h-2zM13 .5h2v2h-2z" fill="#333" stroke="none"/>`)}</div></div>
      <div class="body">
        <div class="pc"><div class="ph"><span style="width:16px;padding-left:3px">${ic(7, 13, svg`<path d="M.7 .7L6 6.500.7 12.300" stroke-width="1.200"/>`)}</span>${t(84, "Fronteira visual")}<span class="grow"></span><div class="toggle"><i></i></div></div></div>
        <div class="pc"><div class="ph"><span style="width:16px">${chev(13, "#333", 1.3)}</span>${t(43, "Sombra")}<span class="grow"></span><div class="toggle on">${ic(10, 8, svg`<path d="M1 4l2.700 2.700L9 1" stroke="#fff" stroke-width="2"/>`)}<i></i></div></div>
          <div class="lbl">${t(19, "Cor")}</div>
          <div class="colors"><div class="inp"><i class="sw"></i>${v}</div><div class="inp fx">fx</div></div>
          <div class="lbl">${t(76, "Deslocamento")}</div><div class="inp">${t(39, "Externa")}${v}</div>
          <div class="lbl">${t(40, "Posição")}</div><div class="inp">${t(76, "Inferior direito")}${v}</div>
        </div>
        <div class="reset">${I.reset}${t(115, "Redefinir para padrão")}</div>
      </div>
      <div class="fmt"><span style="width:14px">${ic(7, 13, svg`<path d="M.7 .7L6 6.500.7 12.300" stroke-width="1.200"/>`)}</span>${t(99, "Formato de dados")}</div>
      <div class="vsb"></div>
    </div>`;
  }

  render() {
    return html`
      <div class="title">${I.save}<span class="undo">${I.undo}</span><span class="redo">${I.redo}</span>
        <div class="row name">${t(267, "Projeto Dio • Salvo pela última vez: Hoje em 22:08")}<i class="caret"></i></div>
        <span class="grow"></span><span class="user">${t(65, "Joao Miguel")}</span>
        <svg class="ic avatar" width="20" height="20" viewBox="0 0 20 20"><circle cx="10" cy="10" r="10" fill="#f3f2f1"/><circle cx="10" cy="6" r="3" fill="none" stroke="#222" stroke-width="1.400"/><path d="M4 11h12c0 7-12 7-12 0z" fill="none" stroke="#222" stroke-width="1.400"/></svg>
        <span class="wmin">${ic(10, 2, svg`<path d="M0 1h10" stroke="#fff"/>`)}</span><span class="wmax">${ic(10, 10, svg`<path d="M.5 .5h9v9h-9z" stroke="#fff"/>`)}</span>${ic(10, 10, svg`<path d="M0 0l10 10M10 0L0 10" stroke="#fff" stroke-width="1.200"/>`)}
      </div>
      <div class="tabs">
        <div class="tab" style="width:94px">${t(48, "Arquivo")}</div>
        <div class="tab on" style="width:114px">${t(84, "Página Inicial")}</div>
        <div class="tab" style="width:69px">${t(38, "Inserir")}</div>
        <div class="tab" style="width:107px">${t(74, "Modelagem")}</div>
        <div class="tab" style="width:82px">${t(50, "Exibição")}</div>
        <div class="tab" style="width:84px">${t(53, "Otimizar")}</div>
        <div class="tab hover" style="width:67px">${t(37, "Ajuda")}</div>
        <div class="tab ctx" style="width:84px">${t(54, "Formato")}</div>
        <div class="tab ctx gap" style="width:134px">${t(104, "Dados / Analisar")}</div>
        <div class="sharebtn">${I.share}${t(70, "Compartilhar")}<span class="v">${chev(10, "#fff", 1.2)}</span></div>
      </div>
      ${this.ribbon()}
      <div class="main">
        <div class="rail"><div class="on">${I.report}</div><div>${I.tableView}</div><div>${I.model}</div><div>${I.dax}</div><div>${I.tmdl}</div></div>
        <div class="center">
          <div class="work">${this.report()}
            <div class="filters">${dbl()}<div style="height:15px"></div>${I.funnelSide}<div style="height:6px"></div><div class="vt">${"Filtros"}</div></div></div>
          <div class="pages">
            <div class="dev"><div class="desk">${ic(20, 15, svg`<path d="M1 1h18v10H1zM10 11v3M6 14h8" stroke="#484644" stroke-width="1.500"/>`)}</div>
              <span class="phone">${ic(14, 20, svg`<rect x=".8" y=".8" width="12" height="18.500" rx="1.500" stroke="#484644" stroke-width="1.500"/><path d="M6 16.500h2" stroke-width="1.500"/>`)}</span>
              <i class="tri2 l"></i><i class="tri2 r"></i></div>
            <div class="pg on">${t(130, "Gestores e Funcionários")}</div>
            <div class="pg two">${t(150, "Funcionários e Dependentes")}</div>
            <div class="add">${ic(12, 12, svg`<path d="M6 1v10M1 6h10" stroke="#fff" stroke-width="2"/>`)}</div>
          </div>
        </div>
        ${this.viz()}
        <div class="data">${dbl()}<div style="height:14px"></div><div class="vt">Dados</div></div>
      </div>
      <div class="status">${t(71, "Página 1 de 2")}<span class="grow"></span>
        <span>-</span><svg class="zoom ic" viewBox="0 0 100 12"><path d="M0 5.500h100M50.500 3v6" stroke="#605e5c"/><path d="M25 0h4v11h-4z" fill="#484644"/></svg><span style="font-size:14px">+</span>
        <span style="width:13px"></span>${t(23, "57%")}<span style="width:19px"></span>
        ${ic(16, 12, svg`<path d="M.5 .5h15v11H.5z" stroke="#605e5c"/><path d="M3 5V3h2M11 3h2v2M13 7v2h-2M5 9H3V7" stroke="#605e5c"/>`)}</div>
      <div class="task">
        ${TASKS.map(([, icon, st]) => html`<div class="app ${st ?? ""}">${icon}</div>`)}
        <div class="tray">
          <span style="transform:scaleY(-1)">${chev(10, "#222", 1.2)}</span><span style="width:19px"></span>
          ${ic(16, 11, svg`<path d="M4 10.500a3 3 0 0 1-.5-6A4.500 4.500 0 0 1 12 4a3.300 3.300 0 0 1 .5 6.500z" fill="#aaa" stroke="#222"/>`)}<span style="width:16px"></span>
          ${ic(16, 14, svg`<rect width="16" height="11" rx="1" fill="#111" stroke="none"/><path d="M4 8l3-5 5 5" fill="#3b8de0" stroke="#fff" stroke-width=".8"/><path d="M5 13h6" stroke-width="1.500"/>`)}<span style="width:16px"></span>
          ${ic(16, 16, svg`<path d="M8 0l7 2.500v5C15 12 11 14.500 8 16 5 14.500 1 12 1 7.500v-5z" fill="#1678cf" stroke="none"/><circle cx="11" cy="11" r="4.500" fill="#1d9e4c" stroke="#fff" stroke-width=".6"/><path d="M9 11l1.500 1.500L13 9.800" stroke="#fff" stroke-width="1.200"/>`)}
          <div class="lang">${t(24, "POR")}<br />${t(27, "PTB2")}</div>
          ${ic(16, 16, svg`<path d="M9 11.500H.7V1.500h11V4M3 14.500h6M6 11.500v3M10.500 5.500h4V9c0 3-4 3-4 0zM12.500 11.500V15" stroke="#222" stroke-width="1.200"/>`)}<span style="width:8px"></span>
          ${ic(16, 13, svg`<path d="M.7 4.500H3L7 1v11L3 8.500H.7zM9 4.500c1 1 1 3 0 4M11 3c2 2 2 5 0 7M13 1c3 3 3 8 0 11" stroke="#222"/>`)}
          <div class="clock">${t(29, "22:08")}${t(62, "16/09/2025")}</div>
        </div>
      </div>`;
  }
}
